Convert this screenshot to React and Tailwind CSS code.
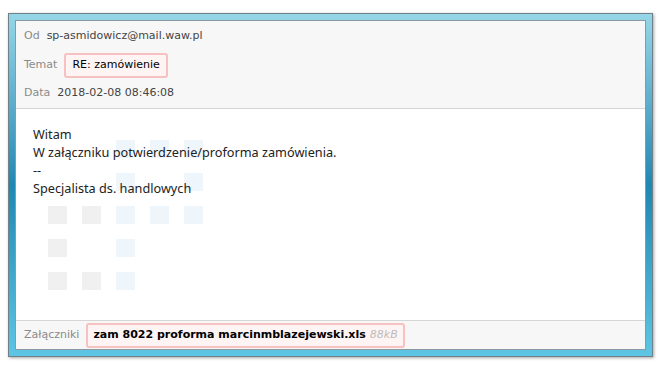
import React from 'react';

const ui = { fontFamily: '"DejaVu Sans", Verdana, sans-serif' };
const body = { fontFamily: '"Noto Sans", "Open Sans", sans-serif' };

const gray = 'bg-[#f0f0f0]';
const blue = 'bg-[#eef5fb]';
const cells = [
    [null, null, blue, blue, blue],
    [null, null, blue, null, blue],
    [gray, gray, blue, blue, blue],
    [gray, null, blue, null, null],
    [gray, gray, blue, null, null],
];

const Watermark = () => (
    <div className="absolute left-[32px] top-[31px] grid grid-cols-[repeat(5,19px)] grid-rows-[repeat(5,18px)] gap-x-[15px] gap-y-[15px]">
        {cells.flat().map((c, i) => (
            <div key={i} className={c || ''} />
        ))}
    </div>
);

const App = () => {
    return (
        <div className="w-[661px] h-[370px] bg-white pt-[13px] pl-[8px]" style={ui}>
            <div className="w-[645px] h-[344px] border border-[#6f8088] bg-gradient-to-b from-[#95d6e8] via-[#1d88b2] to-[#5ec6e4] p-[6px] shadow-[1px_1px_3px_rgba(0,0,0,0.35)]">
                <div className="h-full flex flex-col border border-[#8a9aa0] bg-white">
                    <div className="bg-[#f7f7f7] border-b border-[#d6d6d6] px-[8px] text-[11px]">
                        <div className="h-[31px] flex items-center gap-[7px]">
                            <span className="text-[#8a8a8a]">Od</span>
                            <span className="text-[#444]">sp-asmidowicz@mail.waw.pl</span>
                        </div>
                        <div className="h-[26px] flex items-center gap-[7px]">
                            <span className="text-[#8a8a8a]">Temat</span>
                            <span className="h-[25px] flex items-center px-[6px] rounded-[3px] border-2 border-[#f6c1c1] bg-[#fff4f4] text-black">RE: zamówienie</span>
                        </div>
                        <div className="h-[30px] flex items-center gap-[7px]">
                            <span className="text-[#8a8a8a]">Data</span>
                            <span className="text-[#444]">2018-02-08 08:46:08</span>
                        </div>
                    </div>
                    <div className="relative flex-1 bg-white pl-[17px] pt-[16px] text-[12.7px] leading-[18px] text-[#222]" style={body}>
                        <Watermark />
                        <div className="relative">
                            <p>Witam</p>
                            <p>W załączniku potwierdzenie/proforma zamówienia.</p>
                            <p>--</p>
                            <p>Specjalista ds. handlowych</p>
                        </div>
                    </div>
                    <div className="h-[29px] bg-[#f7f7f7] border-t border-[#d6d6d6] px-[8px] flex items-center gap-[7px] text-[11px]">
                        <span className="text-[#8a8a8a]">Załączniki</span>
                        <span className="h-[25px] flex items-center gap-[4px] px-[5px] rounded-[3px] border-2 border-[#f6c1c1] bg-[#fff4f4]">
                            <span className="font-bold text-black">zam 8022 proforma marcinmblazejewski.xls</span>
                            <span className="italic text-[#bbbbbb]">88kB</span>
                        </span>
                    </div>
                </div>
            </div>
        </div>
    );
};

export default App;
